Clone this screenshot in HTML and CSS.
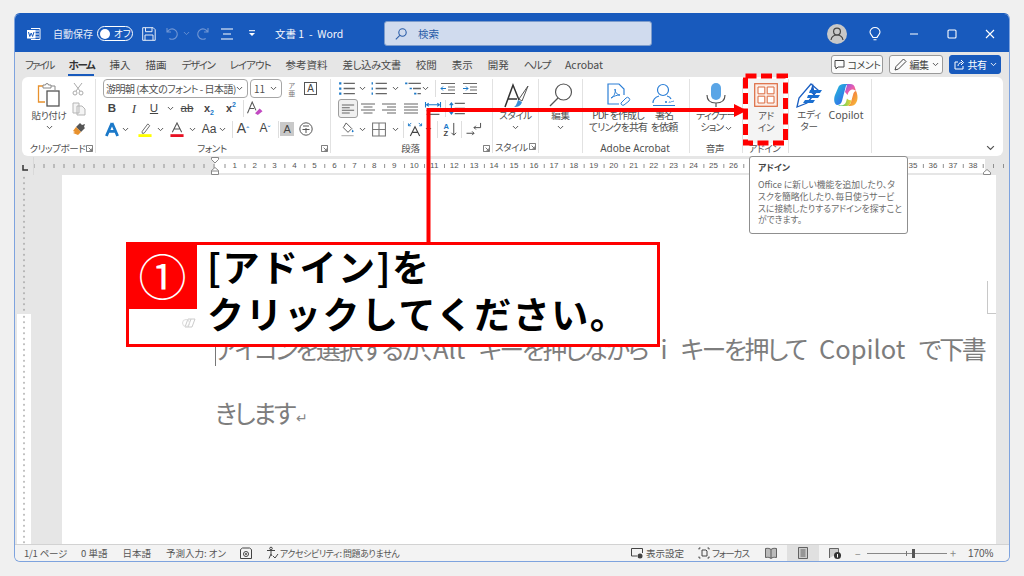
FILE: index.html
```html
<!DOCTYPE html>
<html lang="ja">
<head>
<meta charset="utf-8">
<title>文書 1 - Word</title>
<link rel="stylesheet" href="styles.css">
</head>
<body>
<svg class="sprite" aria-hidden="true">
  <symbol id="chev" viewBox="0 0 8 5"><path d="M1 .8l3 3 3-3" fill="none" stroke="#555" stroke-width="1.1"/></symbol>
  <symbol id="launch" viewBox="0 0 8 8"><path d="M.5.5h7v7h-7zM3 3l3.5 3.5M6.5 4v2.5H4" fill="none" stroke="#666"/></symbol>
  <symbol id="lines" viewBox="0 0 16 12"><path d="M1 1.5h14M1 4.5h9M1 7.5h14M1 10.5h9" fill="none" stroke="#666" stroke-width="1.2"/></symbol>
  <symbol id="linesc" viewBox="0 0 16 12"><path d="M1 1.5h14M3.5 4.5h9M1 7.5h14M3.5 10.5h9" fill="none" stroke="#666" stroke-width="1.2"/></symbol>
  <symbol id="linesr" viewBox="0 0 16 12"><path d="M1 1.5h14M6 4.5h9M1 7.5h14M6 10.5h9" fill="none" stroke="#666" stroke-width="1.2"/></symbol>
  <symbol id="linesj" viewBox="0 0 16 12"><path d="M1 1.5h14M1 4.5h14M1 7.5h14M1 10.5h14" fill="none" stroke="#666" stroke-width="1.2"/></symbol>
</svg>

<main class="window">
  <header class="titlebar">
    <svg class="tb-word" viewBox="0 0 14 14"><path d="M4 1.5h9v11H4" fill="none" stroke="#fff"/><path d="M8 4h4M8 7h4M8 10h4" stroke="#fff"/><rect y="3" width="8.5" height="8.5" fill="#fff"/><path d="M1.5 5l1.3 4.5L4.2 6l1.4 3.5L7 5" fill="none" stroke="#185abd"/></svg>
    <span class="tb-auto">自動保存</span>
    <span class="toggle"><i class="knob"></i><span class="toggle-text">オフ</span></span>
    <svg class="tb-save" viewBox="0 0 14 14"><path d="M.7.7h10.5l2 2v10.6H.7zM3.5.7v4h6.5v-4M3 13.3V8h8v5.3" fill="none" stroke="#e8eef8"/></svg>
    <svg class="tb-undo" viewBox="0 0 13 13"><path d="M1 1v4h4M1.3 5a5.2 5.2 0 1 1 2 6.5" fill="none" stroke="#6f95d4" stroke-width="1.1"/></svg>
    <svg class="tb-chev1" viewBox="0 0 8 5"><path d="M1 .8l3 3 3-3" fill="none" stroke="#6f95d4"/></svg>
    <svg class="tb-redo" viewBox="0 0 13 13"><path d="M12 1v4H8M11.7 5a5.2 5.2 0 1 0-2 6.5" fill="none" stroke="#6f95d4" stroke-width="1.1"/></svg>
    <svg class="tb-touch" viewBox="0 0 12 12"><path d="M0 1h12M2 6h8M0 11h12" stroke="#fff" stroke-width="1.1"/></svg>
    <svg class="tb-qat" viewBox="0 0 8 7"><path d="M1 .7h6" stroke="#fff"/><path d="M1 3l3 3 3-3z" fill="#fff"/></svg>
    <span class="tb-doc">文書 1&nbsp; - &nbsp;Word</span>
    <div class="search">
      <svg class="search-ic" viewBox="0 0 12 12"><circle cx="7.5" cy="4.5" r="3.7" fill="none" stroke="#2a5da8" stroke-width="1.1"/><path d="M4.8 7.3L.8 11.3" stroke="#2a5da8" stroke-width="1.1"/></svg>
      <span>検索</span>
    </div>
    <svg class="tb-avatar" viewBox="0 0 20 20"><circle cx="10" cy="10" r="10" fill="#c8c8c8"/><circle cx="10" cy="7.6" r="3.4" fill="none" stroke="#444" stroke-width="1.2"/><path d="M4 16c.6-3.6 3-5 6-5s5.400 1.400 6 5" fill="none" stroke="#444" stroke-width="1.200"/></svg>
    <svg class="tb-bulb" viewBox="0 0 12 14"><path d="M4 10.500C3.500 8.500 1 7.500 1 5a5 4.500 0 0 1 10 0c0 2.500-2.500 3.500-3 5.500zM4.500 12.800h3" fill="none" stroke="#fff" stroke-width="1.100"/></svg>
    <svg class="tb-min" viewBox="0 0 10 10"><path d="M1 5h8" stroke="#fff" stroke-width="1.100"/></svg>
    <svg class="tb-max" viewBox="0 0 10 10"><rect x="1" y="1" width="8" height="8" rx="1" fill="none" stroke="#fff" stroke-width="1.100"/></svg>
    <svg class="tb-close" viewBox="0 0 10 10"><path d="M1 1l8 8M9 1l-8 8" stroke="#fff" stroke-width="1.100"/></svg>
  </header>

  <nav class="tabs">
    <span class="tab kana">ファイル</span>
    <span class="tab tab-on">ホーム</span>
    <span class="tab">挿入</span>
    <span class="tab">描画</span>
    <span class="tab kana4">デザイン</span>
    <span class="tab kana3">レイアウト</span>
    <span class="tab">参考資料</span>
    <span class="tab kana2">差し込み文書</span>
    <span class="tab">校閲</span>
    <span class="tab">表示</span>
    <span class="tab">開発</span>
    <span class="tab kana4">ヘルプ</span>
    <span class="tab">Acrobat</span>
    <div class="tab-actions">
      <button class="act act-comment"><svg class="act-ic" viewBox="0 0 11 11"><path d="M1 1.500h9v6.500H4L2 10V8H1z" fill="none" stroke="#444"/></svg>コメント</button>
      <button class="act act-edit"><svg class="act-ic2" viewBox="0 0 13 13"><path d="M1 12l1-3.500L9.500 1l2.500 2.500L4.500 11z" fill="none" stroke="#444"/></svg>編集<svg class="chev" viewBox="0 0 8 5"><use href="#chev"/></svg></button>
      <button class="act act-share"><svg class="act-ic" viewBox="0 0 11 11"><path d="M4 3H1v7h8V7M4 7c0-2 1.500-3.500 4-3.500M7 1l2.500 2.500L7 6" fill="none" stroke="#fff"/></svg>共有<svg class="chev chev-w" viewBox="0 0 8 5"><path d="M1 .8l3 3 3-3" fill="none" stroke="#fff"/></svg></button>
    </div>
  </nav>

  <section class="ribbon">
    <div class="group g-clip">
      <div class="gbody">
        <div class="big b-paste">
          <svg class="ic-big" viewBox="0 0 24 24"><path d="M6 3H1.500v16H8" fill="none" stroke="#e8912d" stroke-width="1.300"/><path d="M6 3.500V2h2.500a1.500 1.500 0 0 1 3 0H14v1.500V5H6zM14 3h4v4" fill="none" stroke="#888"/><rect x="10" y="8" width="12" height="15" fill="#fff" stroke="#555" stroke-width="1.300"/></svg>
          <span class="blabel">貼り付け</span>
          <svg class="chev" viewBox="0 0 8 5"><use href="#chev"/></svg>
        </div>
        <div class="col-small">
          <div class="row r1"><svg class="w12h14" viewBox="0 0 12 14"><path d="M2 1l6 8M10 1L4 9" stroke="#aaa"/><circle cx="3" cy="11" r="2" fill="none" stroke="#aaa"/><circle cx="9" cy="11" r="2" fill="none" stroke="#aaa"/></svg></div>
          <div class="row r2"><svg class="w14" viewBox="0 0 14 14"><path d="M1 1h6v10H1zM5 4h5l3 3v6H5z" fill="#f4f4f4" stroke="#b5b5b5"/></svg></div>
          <div class="row r3"><svg class="w14" viewBox="0 0 14 14"><path d="M8 1l2 2 3-1-1 3 1 1-4 4-5-5z" fill="#555"/><path d="M4 5l5 5-3 3-5-2 2-1-2-1z" fill="#e8912d"/></svg></div>
        </div>
      </div>
      <div class="glabel"><i></i><span>クリップボード</span><svg class="launch" viewBox="0 0 8 8"><use href="#launch"/></svg></div>
    </div>

    <div class="group g-font">
      <div class="gbody gcol">
        <div class="row r1">
          <div class="select s-font"><span>游明朝 (本文のフォント - 日本語)</span><svg class="chev" viewBox="0 0 8 5"><use href="#chev"/></svg></div>
          <div class="select s-size ml2"><span>11</span><svg class="chev" viewBox="0 0 8 5"><use href="#chev"/></svg></div>
          <span class="furi ml4">ア<br>亜</span>
          <span class="boxa ml7">A</span>
        </div>
        <div class="row r2">
          <b class="t w14 ml2">B</b>
          <i class="t w14 ml8 serif">I</i>
          <u class="t w14 ml6">U</u>
          <svg class="chev ml6" viewBox="0 0 8 5"><use href="#chev"/></svg>
          <s class="t w18 ml4">ab</s>
          <span class="t w18 ml4 sub">x<sub>2</sub></span>
          <span class="t w18 ml4 sub">x<sup>2</sup></span>
          <i class="vsep ml3"></i>
          <svg class="w18 ml2" viewBox="0 0 18 16"><path d="M1 13L6 1l4 9M3 8h5" fill="none" stroke="#555" stroke-width="1.100"/><path d="M9 13l5-5 3 3-5 4z" fill="#c24ac2"/></svg>
        </div>
        <div class="row r3">
          <svg class="w18" viewBox="0 0 18 16"><path d="M9 1L3 15M9 1l6 14M5.500 10h7" fill="none" stroke="#1b79c9" stroke-width="3"/></svg>
          <svg class="chev ml1" viewBox="0 0 8 5"><use href="#chev"/></svg>
          <svg class="w18 ml7" viewBox="0 0 18 16"><path d="M6 10l6-8 2 2-6 8H6z" fill="none" stroke="#666"/><rect x="2" y="13" width="14" height="3" fill="#ffff00"/></svg>
          <svg class="chev ml3" viewBox="0 0 8 5"><use href="#chev"/></svg>
          <svg class="w16 ml5" viewBox="0 0 16 16"><path d="M3 11L8 1l5 10M5 7.500h6" fill="none" stroke="#555" stroke-width="1.100"/><rect x="1" y="13" width="14" height="3" fill="#e81123"/></svg>
          <svg class="chev ml4" viewBox="0 0 8 5"><use href="#chev"/></svg>
          <span class="t w20 ml3 aa">Aa</span>
          <svg class="chev" viewBox="0 0 8 5"><use href="#chev"/></svg>
          <i class="vsep ml6"></i>
          <span class="t w16 ml2 aa2">A<em class="car">ˆ</em></span>
          <span class="t w16 ml6 aa3">A<em class="car">ˇ</em></span>
          <i class="vsep ml5"></i>
          <span class="shade ml1">A</span>
          <svg class="w14 ml5" viewBox="0 0 14 14"><circle cx="7" cy="7" r="6.200" fill="none" stroke="#555"/><path d="M4 4h6M7 6v5M3.500 7.500h7" stroke="#555"/></svg>
        </div>
      </div>
      <div class="glabel"><i></i><span>フォント</span><svg class="launch" viewBox="0 0 8 8"><use href="#launch"/></svg></div>
    </div>

    <div class="group g-para">
      <div class="gbody gcol">
        <div class="row r1">
          <svg class="w18" viewBox="0 0 16 12"><path d="M5 1.500h10M5 6h10M5 10.500h10" stroke="#666" stroke-width="1.200"/><path d="M1 1.500h2M1 6h2M1 10.500h2" stroke="#1b79c9" stroke-width="2"/></svg>
          <svg class="chev ml3" viewBox="0 0 8 5"><use href="#chev"/></svg>
          <svg class="w18 ml4" viewBox="0 0 16 12"><path d="M5 1.500h10M5 6h10M5 10.500h10" stroke="#666" stroke-width="1.200"/><path d="M2 .5v2M2 5v2M2 9.500v2" stroke="#1b79c9" stroke-width="1.200"/></svg>
          <svg class="chev ml4" viewBox="0 0 8 5"><use href="#chev"/></svg>
          <svg class="w18 ml5" viewBox="0 0 16 12"><path d="M4 1.500h11M8 6h7M12 10.500h3" stroke="#666" stroke-width="1.200"/><path d="M1 1.500h2M5 6h2M9 10.500h2" stroke="#1b79c9" stroke-width="1.500"/></svg>
          <svg class="chev" viewBox="0 0 8 5"><use href="#chev"/></svg>
          <i class="vsep ml6"></i>
          <svg class="w16 ml4" viewBox="0 0 16 12"><path d="M1 1h14M8 4.500h7M8 7.500h7M1 11h14" stroke="#666" stroke-width="1.100"/><path d="M6 6H1M3 4L1 6l2 2" fill="none" stroke="#1b79c9"/></svg>
          <svg class="w16 ml6" viewBox="0 0 16 12"><path d="M1 1h14M8 4.500h7M8 7.500h7M1 11h14" stroke="#666" stroke-width="1.100"/><path d="M1 6h5M4 4l2 2-2 2" fill="none" stroke="#1b79c9"/></svg>
        </div>
        <div class="row r2">
          <span class="alsel"><svg class="w14" viewBox="0 0 16 12"><use href="#lines"/></svg></span>
          <svg class="w18 ml1" viewBox="0 0 18 12"><use href="#linesc"/></svg>
          <svg class="w18 ml3" viewBox="0 0 18 12"><use href="#linesr"/></svg>
          <svg class="w18 ml4" viewBox="0 0 18 12"><use href="#linesj"/></svg>
          <svg class="w18 ml4" viewBox="0 0 16 14"><path d="M1 1v5M15 1v5M2 3.500h12M4 2L2 3.500 4 5M12 2l2 1.500L12 5" fill="none" stroke="#1b79c9"/><path d="M2 9h12M2 12.500h12" stroke="#666"/></svg>
          <i class="vsep ml3"></i>
          <svg class="w18 ml2" viewBox="0 0 16 12"><path d="M6 1.500h9M6 6h9M6 10.500h9" stroke="#666" stroke-width="1.200"/><path d="M3 1v10M1.500 3L3 1l1.500 2M1.500 9L3 11l1.500-2" fill="none" stroke="#1b79c9"/></svg>
        </div>
        <div class="row r3">
          <svg class="w18 ml1" viewBox="0 0 16 16"><path d="M6 1l6 6-4 4-5-5z" fill="none" stroke="#555"/><path d="M13 8c1 1.500 1.500 3 0 3s-1-1.500 0-3z" fill="#1b79c9"/><path d="M1 14.500h13" stroke="#bbb" stroke-width="1.500"/></svg>
          <svg class="chev ml2" viewBox="0 0 8 5"><use href="#chev"/></svg>
          <svg class="w18 ml4" viewBox="0 0 14 14"><path d="M1 1h12v12H1zM7 1v12M1 7h12" fill="none" stroke="#777"/></svg>
          <svg class="chev ml4" viewBox="0 0 8 5"><use href="#chev"/></svg>
          <i class="vsep ml4"></i>
          <svg class="w18 ml2" viewBox="0 0 18 16"><path d="M4 15L9 5l5 10M6 11h6" fill="none" stroke="#444" stroke-width="1.200"/><path d="M5 1L2 4M13 1l3 3M2 1.500V4h2.500M16 1.500V4h-2.500" fill="none" stroke="#1b79c9"/></svg>
          <svg class="chev ml1" viewBox="0 0 8 5"><use href="#chev"/></svg>
          <i class="vsep ml5"></i>
          <svg class="w16 ml4" viewBox="0 0 16 16"><text x="1" y="7" class="sort-a">A</text><text x="1" y="15" class="sort-z">Z</text><path d="M12 1v13M9.500 11.500L12 14l2.500-2.500" fill="none" stroke="#444"/></svg>
          <i class="vsep ml3"></i>
          <svg class="w18 ml3" viewBox="0 0 18 16"><path d="M9 6h7V1M11 4l-2 2 2 2M1 12h8M7 10l2 2-2 2" fill="none" stroke="#444"/></svg>
        </div>
      </div>
      <div class="glabel"><i></i><span>段落</span><svg class="launch" viewBox="0 0 8 8"><use href="#launch"/></svg></div>
    </div>

    <div class="group g-style">
      <div class="gbody">
        <div class="big grow">
          <svg class="ic-style" viewBox="0 0 26 26"><path d="M2 24L10 2l6 15M5 16h9" fill="none" stroke="#333" stroke-width="1.500"/><path d="M25 3L16 16l3 2z" fill="none" stroke="#555"/><path d="M15 17l4 2c-1 4-4 5-8 5 2-1 3-4 4-7z" fill="#3b8fd6"/></svg>
          <span class="blabel">スタイル</span>
          <svg class="chev" viewBox="0 0 8 5"><use href="#chev"/></svg>
        </div>
      </div>
      <div class="glabel glabel-left"><span>スタイル</span><svg class="launch" viewBox="0 0 8 8"><use href="#launch"/></svg></div>
    </div>

    <div class="group g-edit">
      <div class="gbody">
        <div class="big grow">
          <svg class="ic-big" viewBox="0 0 24 24"><circle cx="14.500" cy="9" r="8" fill="#fff" stroke="#555" stroke-width="1.200"/><path d="M9 15L1 23" stroke="#555" stroke-width="1.300"/></svg>
          <span class="blabel">編集</span>
          <svg class="chev" viewBox="0 0 8 5"><use href="#chev"/></svg>
        </div>
      </div>
      <div class="glabel"></div>
    </div>

    <div class="group g-acro">
      <div class="gbody">
        <div class="big w70">
          <svg class="ic-big" viewBox="0 0 24 24"><path d="M13 21H2V1h11l5 5v6" fill="#fff" stroke="#2c7fd6" stroke-width="1.200"/><path d="M5 15c3-1 5-6 4-9 0 3 2 6 5 6-3 0-6 1-9 3z" fill="none" stroke="#2c7fd6"/><path d="M15 20l5-5a2 2 0 0 1 3 3l-5 4a2 2 0 0 1-3-2z" fill="none" stroke="#2c7fd6"/></svg>
          <span class="blabel small">PDF を作成し<br>てリンクを共有</span>
        </div>
        <div class="big w22">
          <svg class="ic-big" viewBox="0 0 24 24"><circle cx="11" cy="7" r="5.500" fill="none" stroke="#2c7fd6" stroke-width="1.200"/><path d="M1 20c0-4 3-6 6-7M15 13c2 .5 3.500 1.500 4 3" fill="none" stroke="#2c7fd6" stroke-width="1.200"/><path d="M1 22.500h22" stroke="#2c7fd6"/><path d="M13 20l2-2M13 18l2 2M17 20c1-3 1 0 2-1s1 0 3-1" fill="none" stroke="#2c7fd6" stroke-width=".8"/></svg>
          <span class="blabel small">署名<br>を依頼</span>
        </div>
      </div>
      <div class="glabel"><i></i><span class="lat">Adobe Acrobat</span><i></i></div>
    </div>

    <div class="group g-voice">
      <div class="gbody">
        <div class="big grow">
          <svg class="ic-big" viewBox="0 0 24 24"><rect x="7" y="0" width="10" height="17" rx="5" fill="#5aa5e6"/><path d="M3 12c0 6 4 8 9 8s9-2 9-8M12 20v4" fill="none" stroke="#555" stroke-width="1.200"/></svg>
          <span class="blabel small">ディクテー<br>ション <svg class="chev" viewBox="0 0 8 5"><use href="#chev"/></svg></span>
        </div>
      </div>
      <div class="glabel"><i></i><span>音声</span><i></i></div>
    </div>

    <div class="group g-addin">
      <div class="gbody">
        <div class="big addin-btn">
          <svg class="ic-big" viewBox="0 0 24 24"><rect x=".7" y=".7" width="22.600" height="22.600" fill="#fbeee8" stroke="#dc6a3f" stroke-width="1.200"/><path d="M4 4h6.800v6.800H4zM13.200 4H20v6.800h-6.800zM4 13.200h6.800V20H4zM13.200 13.200H20V20h-6.800z" fill="#fff" stroke="#dc6a3f"/></svg>
          <span class="blabel">アド<br>イン</span>
        </div>
      </div>
      <div class="glabel"><i></i><span>アドイン</span><i></i></div>
    </div>

    <div class="group g-copilot">
      <div class="gbody">
        <div class="big w40">
          <svg class="ic-editor" viewBox="0 0 26 26"><path d="M1 25L3 16 15 2l7 6-11 13z" fill="#fff" stroke="#1b5fc2" stroke-width="1.300"/><path d="M17 1l-3 9 5 4z" fill="#1b5fc2"/><path d="M14 8h12l-2 3H13zM12 13h12l-2 3H11zM9 18h10l-2 3H7z" fill="#1b6fd0"/></svg>
          <span class="blabel">エディ<br>ター</span>
        </div>
        <div class="big w34">
          <svg class="ic-big" viewBox="0 0 24 24">
            <defs>
              <linearGradient id="cpa" x1="0" y1="0" x2="1" y2="1"><stop offset="0" stop-color="#22c0d8"/><stop offset=".6" stop-color="#2f7fe6"/><stop offset="1" stop-color="#3a5fe0"/></linearGradient>
              <linearGradient id="cpb" x1="0" y1="0" x2="1" y2="1"><stop offset="0" stop-color="#8a5ce6"/><stop offset=".5" stop-color="#e85bb0"/><stop offset="1" stop-color="#f57a4b"/></linearGradient>
              <linearGradient id="cpd" x1="0" y1="0" x2="1" y2="1"><stop offset="0" stop-color="#f0604f"/><stop offset=".6" stop-color="#f59a3a"/><stop offset="1" stop-color="#f5c53a"/></linearGradient>
              <linearGradient id="cpc" x1="0" y1="0" x2="1" y2="0"><stop offset="0" stop-color="#2fc48c"/><stop offset=".6" stop-color="#9fd24a"/><stop offset="1" stop-color="#f2cf3a"/></linearGradient>
            </defs>
            <path d="M4 5C5 2 7 1 10 1h5c-2 0-3 1.500-3.500 3.500L8 18c-.7 2.500-2.500 4-5 4C0 21-.5 16 1 12z" fill="url(#cpa)"/>
            <path d="M13 1h3c3 0 4.500 1.500 5 4l1 3c-2-1.500-4.500-2-6-.5-1.500 1-2 3-2.500 4.500L11 9l1.500-5C13 2.500 13 1.500 13 1z" fill="url(#cpb)"/>
            <path d="M22 8c2 4 2 9 0 12-1 2-3 3-6 3h-3c2.500-.500 3.500-2 4-4l2-7c.5-2 1-3.500 3-4z" fill="url(#cpd)"/>
            <path d="M4 22c4 1 7 0 8-3l1-3.500c1 1.500 3 2 4.500 1.500l-.5 2c-.5 2-1.500 3.500-4 4H7c-1 0-2 0-3-1z" fill="url(#cpc)"/>
          </svg>
          <span class="blabel cp">Copilot</span>
        </div>
      </div>
      <div class="glabel"></div>
    </div>

    <div class="collapse"><svg class="chev-big" viewBox="0 0 8 5"><use href="#chev"/></svg></div>
  </section>

  <div class="ruler">
    <div class="r-corner"><svg class="r-l" viewBox="0 0 6 6"><path d="M1 0v5h5" fill="none" stroke="#333" stroke-width="1.500"/></svg></div>
    <div class="r-left"></div>
    <div class="r-white">
      <span>1</span><span>2</span><span>3</span><span>4</span><span>5</span><span>6</span><span>7</span><span>8</span><span>9</span><span>10</span>
      <span>11</span><span>12</span><span>13</span><span>14</span><span>15</span><span>16</span><span>17</span><span>18</span><span>19</span><span>20</span>
      <span>21</span><span>22</span><span>23</span><span>24</span><span>25</span><span>26</span><span></span><span></span><span></span><span></span>
      <span></span><span></span><span></span><span></span><span>35</span><span>36</span><span>37</span><span>38</span>
    </div>
    <div class="r-right"></div>
    <svg class="m-top" viewBox="0 0 8 7"><path d="M.5.5h7v2L4 6 .5 2.500z" fill="#fff" stroke="#888"/></svg>
    <svg class="m-bot" viewBox="0 0 8 8"><path d="M.5 7.500v-4L4 .5l3.500 3v4zM.5 4h7" fill="#fff" stroke="#888"/></svg>
    <svg class="m-right" viewBox="0 0 8 6"><path d="M.5 5.500v-2L4 .5l3.500 3v2z" fill="#fff" stroke="#888"/></svg>
  </div>

  <div class="docarea">
    <div class="vruler"><div class="v-gray"></div><div class="v-white"></div></div>
    <div class="vmargin"></div>
    <article class="page">
      <p class="ghost">アイコンを選択するか、<span class="lat-doc">Alt</span> キーを押しながら <span class="lat-doc">i</span> キーを押して <span class="lat-doc">Copilot</span> で下書<br>きします<span class="pil">↵</span></p>
      <i class="caret"></i>
      <i class="corner"></i>
    </article>
    <div class="scroll"></div>
  </div>

  <footer class="status">
    <span class="st st1">1/1 ページ</span>
    <span class="st st2">0 単語</span>
    <span class="st st2">日本語</span>
    <span class="st st2">予測入力: オン</span>
    <svg class="st-ic st-cam" viewBox="0 0 12 12"><path d="M.5 2.500l2-1.500h7l2 1.500v9H.5z" fill="none" stroke="#444"/><circle cx="6" cy="7" r="2.500" fill="none" stroke="#444"/><circle cx="6" cy="7" r="1" fill="#444"/></svg>
    <svg class="st-ic st-acc" viewBox="0 0 12 12"><circle cx="5" cy="1.500" r="1.300" fill="none" stroke="#444"/><path d="M1 3.500h8M5 3.500V7L3 11.500M5 7l1 2M7 9l2 2 3-4" fill="none" stroke="#444"/></svg>
    <span class="st st-acc-t">アクセシビリティ: 問題ありません</span>
    <svg class="st-ic st-disp" viewBox="0 0 12 12"><path d="M6 9H.5V1.500h11V6" fill="none" stroke="#444"/><circle cx="9" cy="9" r="2.500" fill="#444"/></svg>
    <span class="st st-disp-t">表示設定</span>
    <svg class="st-ic st-foc" viewBox="0 0 12 12"><path d="M4 3h4l1 1v5H4z" fill="none" stroke="#444"/><path d="M1 2.500V1h1.500M11 2.500V1H9.500M1 9.500V11h1.500M11 9.500V11H9.500" fill="none" stroke="#444"/></svg>
    <span class="st st-foc-t">フォーカス</span>
    <svg class="st-ic st-read" viewBox="0 0 12 12"><path d="M6 2.500C5 1.500 3 1 .5 1.500v9c2.500-.5 4.500 0 5.500 1 1-1 3-1.500 5.500-1v-9C9 1 7 1.500 6 2.500zM6 2.500v9" fill="#bbb" stroke="#444" stroke-width=".8"/></svg>
    <span class="st-print"><svg class="st-ic" viewBox="0 0 10 12"><path d="M.5.500h9v11h-9zM2.500 3h5M2.500 5h5M2.500 7h5M2.500 9h5" fill="#ccc" stroke="#444" stroke-width=".8"/></svg></span>
    <svg class="st-ic st-web" viewBox="0 0 12 12"><path d="M.5 11V1.500h9V6" fill="#ccc" stroke="#444" stroke-width=".8"/><circle cx="8.500" cy="8.500" r="3.500" fill="#333"/><path d="M8.500 7v3.500" stroke="#fff"/></svg>
    <span class="zoom-minus">−</span>
    <div class="slider"><i class="s-mid"></i><i class="s-thumb"></i></div>
    <span class="zoom-plus">+</span>
    <span class="st st-pct">170%</span>
  </footer>
</main>

<aside class="tooltip">
  <h4>アドイン</h4>
  <p>Office に新しい機能を追加したり、タ<br>スクを簡略化したり、毎日使うサービ<br>スに接続したりするアドインを探すこと<br>ができます。</p>
</aside>

<svg class="marks" viewBox="0 0 1024 576" aria-hidden="true">
  <rect x="745.500" y="76" width="40" height="67" fill="none" stroke="#f00" stroke-width="5" stroke-dasharray="11 4.500"/>
  <path d="M428.500 243V110H736" fill="none" stroke="#f00" stroke-width="4"/>
  <path d="M734 104l13 6.500-13 6.500z" fill="#f00"/>
</svg>

<aside class="callout">
  <div class="badge">①</div>
  <p class="callout-text">[アドイン]を<br>クリックしてください。</p>
  <svg class="cp-ghost" viewBox="0 0 14 12"><path d="M3 10l3-8h3L6 10zM6 10h4l3-8H9" fill="none" stroke="#ccc"/><circle cx="4" cy="6" r="3.500" fill="none" stroke="#ddd"/></svg>
</aside>
</body>
</html>
```
FILE: styles.css
```css
* { box-sizing: border-box; }
html, body { margin: 0; padding: 0; }
body {
  width: 1024px; height: 576px; overflow: hidden; background: #f0f0f0; position: relative;
  font-family: "Noto Sans CJK JP", "Noto Sans", sans-serif;
  font-feature-settings: "palt"; color: #444; padding: 13px 14px 0;
}
.sprite { display: none; }
svg { display: block; flex: none; overflow: visible; }
i, em { font-style: normal; }

.window {
  width: 996px; height: 549px; background: #e6e6e6; border: 1px solid #7ea3de; border-top-color: #185abd;
  border-radius: 6px; overflow: hidden; display: flex; flex-direction: column;
}

/* title bar */
.titlebar { height: 38px; flex: none; background: #185abd; color: #fff; display: flex; align-items: center; padding-top: 1px; }
.tb-word { width: 14px; height: 14px; margin-left: 12px; }
.tb-auto { font-size: 10px; margin-left: 12px; width: 37px; color: #e6edf8; white-space: nowrap; }
.toggle { width: 36px; height: 15px; margin-left: 7px; border: 1px solid #fff; border-radius: 8px; display: flex; align-items: center; padding-left: 2px; }
.knob { width: 10px; height: 10px; background: #fff; border-radius: 50%; }
.toggle-text { font-size: 9.500px; margin-left: 4px; line-height: 1; }
.tb-save { width: 14px; height: 14px; margin-left: 9px; }
.tb-undo { width: 13px; height: 13px; margin-left: 10px; }
.tb-chev1 { width: 7px; height: 5px; margin-left: 4px; }
.tb-redo { width: 13px; height: 13px; margin-left: 6px; }
.tb-touch { width: 12px; height: 12px; margin-left: 12px; }
.tb-qat { width: 8px; height: 7px; margin-left: 15px; }
.tb-doc { font-size: 10.500px; margin-left: 19px; width: 109px; white-space: nowrap; color: #f4f7fc; }
.search { width: 268px; height: 25px; background: #d0dbee; border: 1px solid #7d9ccb; border-radius: 3px; display: flex; align-items: center; font-size: 10.500px; color: #2a5da8; padding-left: 10px; }
.search-ic { width: 12px; height: 12px; margin-right: 11px; }
.tb-avatar { width: 20px; height: 20px; margin-left: 175px; }
.tb-bulb { width: 12px; height: 14px; margin-left: 22px; }
.tb-min { width: 10px; height: 10px; margin-left: 28px; }
.tb-max { width: 10px; height: 10px; margin-left: 28px; }
.tb-close { width: 10px; height: 10px; margin-left: 28px; }

/* tabs */
.tabs { height: 25px; flex: none; display: flex; align-items: center; gap: 15px; padding: 0 8px 0 10px; font-size: 10.500px; color: #4a4a4a; }
.tab { white-space: nowrap; height: 20px; line-height: 18px; margin-top: 2px; }
.tab-on { font-weight: 700; color: #333; border-bottom: 2px solid #185abd; letter-spacing: -1.300px; }
.kana { letter-spacing: -2px; }
.kana2 { letter-spacing: -.5px; }
.kana3 { letter-spacing: -1px; }
.kana4 { letter-spacing: -1.300px; }
.tab-actions { margin-left: auto; display: flex; gap: 6px; }
.act { font: inherit; font-size: 10px; color: #444; height: 19px; border: 1px solid #9a9a9a; border-radius: 3px; background: #fbfbfb; display: flex; align-items: center; justify-content: center; padding: 0; gap: 3px; white-space: nowrap; letter-spacing: -.5px; }
.act-comment { width: 52px; }
.act-edit { width: 54px; }
.act-share { width: 52px; background: #185abd; border-color: #185abd; color: #fff; }
.act-ic { width: 11px; height: 11px; }
.act-ic2 { width: 13px; height: 13px; }
.chev { width: 7px; height: 5px; }

/* ribbon */
.ribbon { height: 79px; flex: none; margin: 0 6px 1px 7px; padding-top: 2px; background: #fff; border-radius: 6px; display: flex; align-items: flex-start; font-size: 9.500px; letter-spacing: -.35px; color: #505050; }
.group { height: 74px; border-right: 1.500px solid #e2e2e2; display: flex; flex-direction: column; flex: none; }
.gbody { height: 61px; display: flex; flex: none; }
.gcol { flex-direction: column; padding-left: 7px; }
.glabel { height: 13px; line-height: 16px; display: grid; grid-template-columns: 1fr auto 1fr; align-items: center; white-space: nowrap; padding-right: 2px; flex: none; font-size: 9.500px; }
.glabel-left { display: flex; justify-content: space-between; padding: 0 2px; }
.lat { letter-spacing: 0; font-size: 10px; font-family: "Noto Sans", sans-serif; }
.launch { width: 7px; height: 7px; justify-self: end; }
.g-clip { width: 74px; }
.g-clip .gbody { padding-left: 4px; }
.g-font { width: 235px; }
.g-para { width: 162px; }
.g-style { width: 46px; }
.g-edit { width: 44px; }
.g-acro { width: 107px; }
.g-voice { width: 53px; }
.g-addin { width: 46px; }
.g-copilot { width: 83px; }

.big { display: flex; flex-direction: column; align-items: center; padding-top: 4px; text-align: center; flex: none; }
.grow { flex: 1; }
.ic-big { width: 24px; height: 24px; }
.ic-style { width: 26px; height: 26px; margin-bottom: -2px; }
.ic-editor { width: 26px; height: 26px; margin-bottom: -2px; margin-top: -1px; }
.blabel { margin-top: 2px; line-height: 12px; white-space: nowrap; }
.blabel .chev { display: inline-block; }
.small { font-size: 10px; letter-spacing: -.9px; }
.b-paste { width: 46px; }
.b-paste .chev { margin-top: 4px; }
.g-style .chev, .g-edit .chev { margin-top: 4px; }
.col-small { width: 14px; display: flex; flex-direction: column; }
.w70 { width: 70px; }
.w22 { width: 22px; }
.w40 { width: 40px; }
.w34 { width: 34px; }
.addin-btn { width: 36px; height: 64px; margin: 0 0 0 5px; background: #f4f4f4; }
.cp { font-size: 10.500px; letter-spacing: 0; font-family: "Noto Sans", sans-serif; }

.row { display: flex; align-items: center; flex: none; }
.r1 { height: 19px; }
.r2 { height: 21px; }
.r3 { height: 20px; }
.w12h14 { width: 12px; height: 14px; }
.w14 { width: 14px; }
.w16 { width: 16px; }
.w18 { width: 18px; }
.w20 { width: 20px; }
svg.w14 { height: 14px; }
svg.w16 { height: 15px; }
svg.w18 { height: 15px; }
.ml1 { margin-left: 1px; }
.ml2 { margin-left: 2px; }
.ml3 { margin-left: 3px; }
.ml4 { margin-left: 4px; }
.ml5 { margin-left: 5px; }
.ml6 { margin-left: 6px; }
.ml7 { margin-left: 7px; }
.ml8 { margin-left: 8px; }
.t { display: block; text-align: center; font-family: "Liberation Sans", sans-serif; font-size: 11.500px; color: #444; line-height: 15px; letter-spacing: 0; }
.serif { font-style: italic; font-family: "Liberation Serif", serif; font-size: 13px; }
.sub { font-weight: 700; font-size: 11px; }
sub, sup { font-size: 7px; line-height: 0; color: #1b79c9; }
.aa { font-size: 12px; }
.aa2 { font-size: 14px; }
.aa3 { font-size: 12px; }
.car { color: #1b79c9; font-size: 9px; }
.vsep { width: 1px; height: 17px; background: #dedede; flex: none; }
.select { height: 19px; border: 1px solid #a6a6a6; border-radius: 4px; display: flex; align-items: center; justify-content: space-between; padding: 0 4px 0 2px; font-size: 10px; letter-spacing: -.5px; white-space: nowrap; color: #505050; }
.s-font { width: 145px; }
.s-size { width: 32px; padding-left: 3px; font-size: 10px; letter-spacing: 0; }
.furi { width: 11px; font-size: 7px; line-height: 8px; text-align: center; color: #777; }
.boxa { width: 13px; height: 13px; border: 1px solid #555; font: 10px/11px "Liberation Sans", sans-serif; text-align: center; color: #444; }
.shade { width: 14px; height: 14px; background: #c9c9c9; font: 11px/14px "Liberation Sans", sans-serif; text-align: center; color: #444; }
.alsel { width: 20px; height: 19px; border: 1px solid #9e9e9e; border-radius: 3px; background: #f0f0f0; display: flex; align-items: center; justify-content: center; flex: none; }
.sort-a { font: 700 8px "Liberation Sans", sans-serif; fill: #1b79c9; }
.sort-z { font: 700 8px "Liberation Sans", sans-serif; fill: #444; }
.collapse { flex: 1; height: 72px; display: flex; justify-content: flex-end; align-items: flex-end; padding-right: 8px; }
.chev-big { width: 9px; height: 6px; }

/* ruler */
.ruler { height: 18px; flex: none; display: flex; align-items: center; position: relative; }
.r-corner { width: 19px; height: 18px; background: #e6e6e6; border-right: 1px solid #d9d9d9; padding: 8px 0 0 7px; }
.r-l { width: 6px; height: 6px; }
.r-left { width: 181px; height: 13px; background: linear-gradient(90deg, #8f8f8f 1px, transparent 1px) 9.500px center / 10px 4px repeat-x; }
.r-white { width: 770px; height: 14px; background: #fff linear-gradient(90deg, #8f8f8f 1px, transparent 1px) 9.500px center / 19.960px 4px repeat-x; display: flex; padding-left: 9.700px; }
.r-white span { width: 19.960px; flex: none; text-align: center; font: 8px/14px "Liberation Sans", sans-serif; color: #555; }
.r-right { flex: 1; height: 13px; background: linear-gradient(90deg, #8f8f8f 1px, transparent 1px) 8px center / 10px 4px repeat-x; }
.m-top { position: absolute; left: 196px; top: 0; width: 8px; height: 7px; }
.m-bot { position: absolute; left: 196px; top: 10px; width: 8px; height: 8px; }
.m-right { position: absolute; left: 968px; top: 12px; width: 8px; height: 6px; }

/* document */
.docarea { flex: 1; min-height: 0; display: flex; }
.vruler { width: 14px; margin-left: 2px; flex: none; display: flex; flex-direction: column; }
.v-gray { height: 139px; flex: none; background: radial-gradient(circle, #999 .6px, transparent .8px) center top / 4px 5.500px repeat-y; }
.v-white { flex: 1; background: #fff radial-gradient(circle, #999 .6px, transparent .8px) center top / 4px 5.500px repeat-y; }
.vmargin { width: 31px; flex: none; }
.page { width: 934px; flex: none; background: #fff; position: relative; padding: 141px 0 0 153px; overflow: hidden; }
.ghost { margin: 0; font-size: 25px; line-height: 64px; color: #7d7d7d; white-space: nowrap; letter-spacing: -2.400px; word-spacing: 10px; }
.lat-doc { letter-spacing: 0; font-size: 25.500px; }
.pil { font-size: 14px; color: #888; letter-spacing: 0; margin-left: 2px; }
.caret { position: absolute; left: 153px; top: 164px; width: 1px; height: 27px; background: #777; }
.corner { position: absolute; left: 925px; top: 106px; width: 9px; height: 33px; border: solid #c8c8c8; border-width: 0 0 1px 1px; }
.scroll { flex: 1; }

/* status */
.status { height: 17px; flex: none; background: #f3f3f3; border-top: 1px solid #d2d2d2; display: flex; align-items: center; font-size: 9.500px; color: #555; white-space: nowrap; }
.st1 { margin-left: 9px; width: 42px; letter-spacing: -.2px; }
.st2 { margin-left: 15px; }
.st-ic { width: 12px; height: 12px; }
.st-cam { margin-left: 14px; }
.st-acc { margin-left: 14px; }
.st-acc-t { margin-left: 2px; width: 118px; font-size: 9px; letter-spacing: -.45px; }
.st-disp { margin-left: 233px; }
.st-disp-t { margin-left: 3px; width: 39px; }
.st-foc { margin-left: 13px; }
.st-foc-t { margin-left: 2px; width: 36px; letter-spacing: -1px; }
.st-read { margin-left: 17px; }
.st-print { width: 32px; height: 16px; margin-left: 10px; background: #e0e0e0; display: flex; align-items: center; justify-content: center; }
.st-print .st-ic { width: 10px; }
.st-web { margin-left: 10px; }
.zoom-minus { margin-left: 14px; width: 12px; font-size: 10px; color: #888; }
.slider { width: 80px; height: 1px; background: #888; position: relative; margin-left: 0; }
.s-mid { position: absolute; left: 39px; top: -2px; width: 1px; height: 5px; background: #777; }
.s-thumb { position: absolute; left: 45px; top: -4px; width: 3px; height: 9px; background: #555; }
.zoom-plus { margin-left: 3px; width: 13px; font-size: 11px; color: #888; }
.st-pct { margin-left: 5px; font-size: 10px; font-family: "Liberation Sans", sans-serif; }

/* overlays */
.tooltip { position: absolute; left: 749px; top: 156px; width: 159px; height: 78px; background: #fff; border: 1px solid #8f8f8f; border-radius: 3px; padding: 5px 8px; font-size: 8.800px; color: #6a6a6a; white-space: nowrap; }
.tooltip h4 { margin: 0 0 5px; font-size: 8.800px; line-height: 12px; font-weight: 700; color: #444; }
.tooltip p { margin: 0; line-height: 11.800px; }
.marks { position: absolute; left: 0; top: 0; width: 1024px; height: 576px; }
.callout { position: absolute; left: 126px; top: 242px; width: 534px; height: 105px; background: #fff; border: 3px solid #f00; display: flex; align-items: flex-start; }
.badge { width: 69px; height: 65px; margin: -1px 0 0 -1px; background: #f00; color: #fff; font-size: 48px; line-height: 60px; text-align: center; flex: none; }
.callout-text { margin: -2px 0 0 10px; font-size: 37px; line-height: 46.500px; font-weight: 700; color: #000; white-space: nowrap; font-feature-settings: normal; letter-spacing: 1.500px; }
.cp-ghost { position: absolute; left: 53px; top: 72px; width: 14px; height: 12px; }
```
